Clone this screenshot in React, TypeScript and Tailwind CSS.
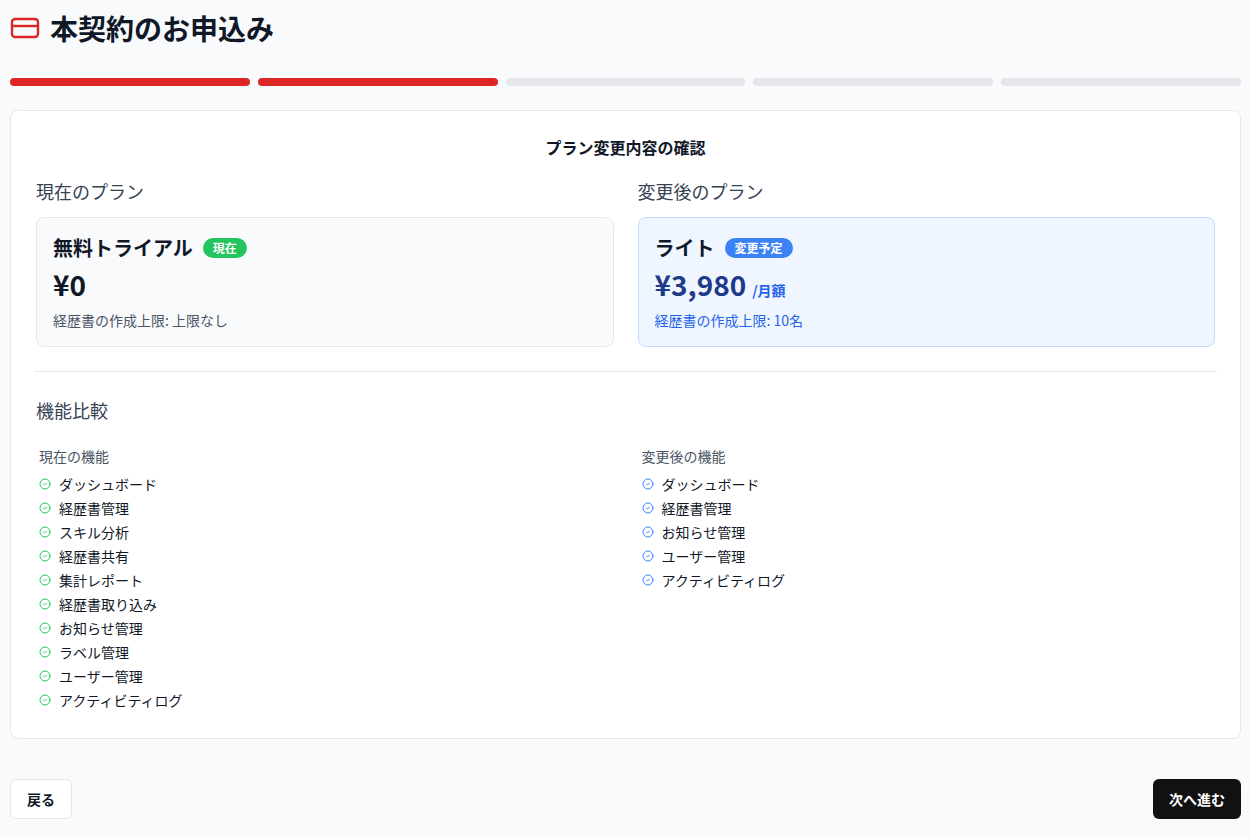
import { CircleCheck } from "lucide-react";

const current = ["ダッシュボード", "経歴書管理", "スキル分析", "経歴書共有", "集計レポート", "経歴書取り込み", "お知らせ管理", "ラベル管理", "ユーザー管理", "アクティビティログ"];
const next = ["ダッシュボード", "経歴書管理", "お知らせ管理", "ユーザー管理", "アクティビティログ"];

function FeatureList({ title, items, color }: { title: string; items: string[]; color: string }) {
  return (
    <div>
      <div className="text-sm text-gray-600 mb-[6px] pl-[4px]">{title}</div>
      <ul>
        {items.map((f) => (
          <li key={f} className="flex items-center gap-[8px] h-[24px] text-sm text-gray-900 pl-[4px]">
            <CircleCheck className={`w-[12px] h-[12px] ${color}`} strokeWidth={2} />
            {f}
          </li>
        ))}
      </ul>
    </div>
  );
}

export default function App() {
  return (
    <div className="min-h-screen bg-[#f9fafb] px-[10px] pt-[10px] pb-[12px]" style={{ fontFamily: '"Noto Sans CJK JP", "Noto Sans", sans-serif' }}>
      <div className="flex items-center gap-[10px] h-[36px]">
        <svg width="30" height="22" viewBox="0 0 30 22" fill="none" stroke="#dc2626" strokeWidth="2.4">
          <rect x="2" y="2" width="26" height="18" rx="3" />
          <line x1="2" y1="9" x2="28" y2="9" />
        </svg>
        <h1 className="text-[28px] font-bold text-gray-900">本契約のお申込み</h1>
      </div>
      <div className="grid grid-cols-5 gap-[8px] mt-[32px]">
        {[0, 1, 2, 3, 4].map((i) => (
          <div key={i} className={`h-[8px] rounded-full ${i < 2 ? "bg-[#dc2626]" : "bg-gray-200"}`} />
        ))}
      </div>
      <div className="mt-[24px] bg-white border border-gray-200 rounded-lg px-[24px] pt-[24px] pb-[26px]">
        <h2 className="text-center text-base font-bold text-gray-900">プラン変更内容の確認</h2>
        <div className="grid grid-cols-2 gap-[24px] mt-[18px] px-[1px]">
          <div>
            <div className="text-lg text-gray-700 mb-[12px]">現在のプラン</div>
            <div className="h-[130px] rounded-lg border border-gray-200 bg-[#f9fafb] px-[16px] pt-[16px]">
              <div className="flex items-center gap-[10px]">
                <span className="text-xl font-bold text-gray-900">無料トライアル</span>
                <span className="bg-[#22c55e] text-white text-xs font-bold rounded-full px-[10px] py-[2px]">現在</span>
              </div>
              <div className="text-[28px] font-bold text-gray-900 leading-[40px] mt-[2px]">¥0</div>
              <div className="text-sm text-gray-600 mt-[6px]">経歴書の作成上限: 上限なし</div>
            </div>
          </div>
          <div>
            <div className="text-lg text-gray-700 mb-[12px]">変更後のプラン</div>
            <div className="h-[130px] rounded-lg border border-[#bfdbfe] bg-[#eff6ff] px-[16px] pt-[16px]">
              <div className="flex items-center gap-[10px]">
                <span className="text-xl font-bold text-gray-900">ライト</span>
                <span className="bg-[#3b82f6] text-white text-xs font-bold rounded-full px-[10px] py-[2px]">変更予定</span>
              </div>
              <div className="flex items-baseline gap-[6px] mt-[2px]">
                <span className="text-[28px] font-bold text-[#1e3a8a] leading-[40px]">¥3,980</span>
                <span className="text-sm font-bold text-[#2563eb]">/月額</span>
              </div>
              <div className="text-sm text-[#2563eb] mt-[6px]">経歴書の作成上限: 10名</div>
            </div>
          </div>
        </div>
        <div className="border-t border-gray-200 mt-[24px] -mx-[1px]" />
        <div className="text-lg text-gray-700 mt-[24px] px-[1px]">機能比較</div>
        <div className="grid grid-cols-2 gap-[24px] mt-[22px]">
          <FeatureList title="現在の機能" items={current} color="text-[#22c55e]" />
          <FeatureList title="変更後の機能" items={next} color="text-[#3b82f6]" />
        </div>
      </div>
      <div className="flex justify-between mt-[40px]">
        <button className="h-[40px] px-[16px] bg-white border border-gray-200 rounded-md text-sm font-bold text-gray-900">戻る</button>
        <button className="h-[40px] px-[16px] bg-[#111111] rounded-md text-sm font-bold text-white">次へ進む</button>
      </div>
    </div>
  );
}
